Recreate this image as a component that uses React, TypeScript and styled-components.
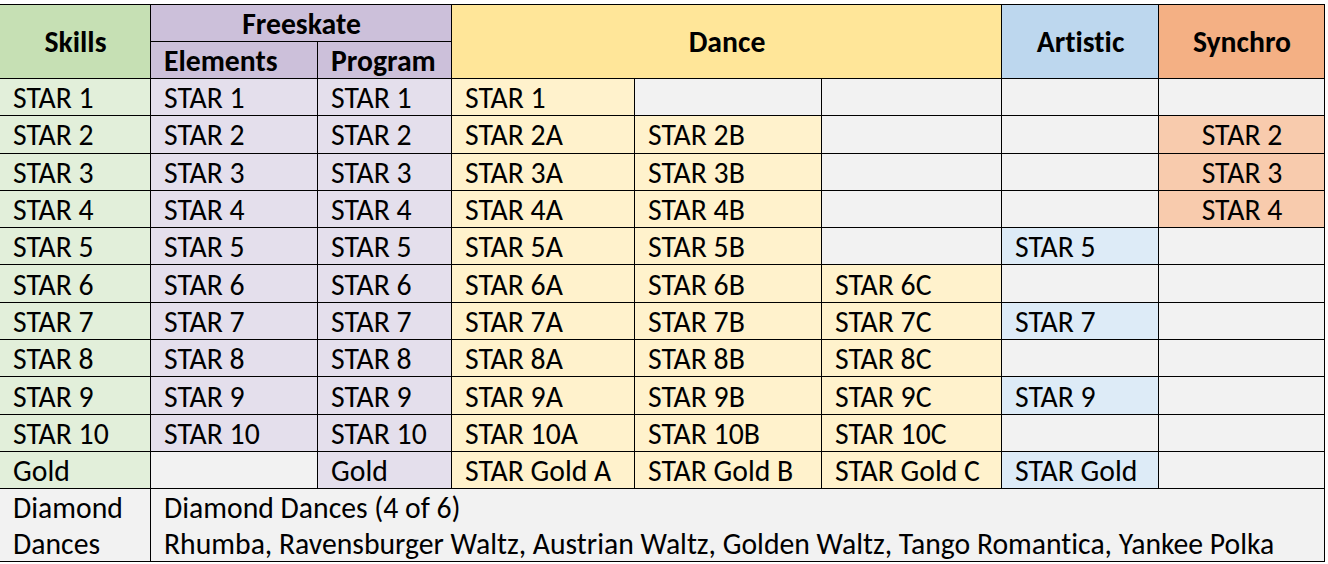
import React from "react";
import styled, { createGlobalStyle, css } from "styled-components";

type Tone = "skills" | "free" | "dance" | "artistic" | "synchro" | "empty";

const headerBg: Record<Tone, string> = {
  skills: "#C6E0B4",
  free: "#CCC0DA",
  dance: "#FFE699",
  artistic: "#BDD7EE",
  synchro: "#F4B084",
  empty: "#F2F2F2",
};

const dataBg: Record<Tone, string> = {
  skills: "#E2EFDA",
  free: "#E4DFEC",
  dance: "#FFF2CC",
  artistic: "#DDEBF7",
  synchro: "#F8CBAD",
  empty: "#F2F2F2",
};

const GlobalStyle = createGlobalStyle`
  html, body {
    margin: 0;
    padding: 0;
    background: #ffffff;
  }
  body {
    font-family: "Carlito", "Calibri", "Liberation Sans", sans-serif;
    font-variant-ligatures: none;
    color: #000000;
  }
`;

const Page = styled.div`
  padding-top: 4px;
  width: 1328px;
  height: 564px;
  box-sizing: border-box;
  overflow: hidden;
`;

const Sheet = styled.div`
  display: grid;
  grid-template-columns: 150px 166px 133px 182px 186px 179px 156px 165px;
  grid-template-rows: 36px 36px repeat(11, 36.3px) 72px;
  gap: 1px;
  width: fit-content;
  background: #000000;
  border: 1px solid #000000;
  border-left: none;
`;

const Cell = styled.div<{
  $tone: Tone;
  $head?: boolean;
  $center?: boolean;
  $col?: string;
  $row?: string;
}>`
  display: flex;
  align-items: center;
  justify-content: ${(p) => (p.$center ? "center" : "flex-start")};
  padding: ${(p) => (p.$head ? "1px 12px 0 13px" : "2px 12px 0 13px")};
  box-sizing: border-box;
  min-width: 0;
  white-space: nowrap;
  font-size: 29.7px;
  line-height: 36px;
  font-weight: ${(p) => (p.$head ? 700 : 400)};
  background: ${(p) => (p.$head ? headerBg[p.$tone] : dataBg[p.$tone])};
  ${(p) =>
    p.$col &&
    css`
      grid-column: ${p.$col};
    `}
  ${(p) =>
    p.$row &&
    css`
      grid-row: ${p.$row};
    `}
`;

const NoteCell = styled(Cell)`
  flex-direction: column;
  align-items: flex-start;
  justify-content: center;
  padding-top: 1px;
`;

const NoteLine = styled.span`
  display: block;
  height: 36px;
`;

type Row = {
  skills: string;
  elements: string;
  program: string;
  dance: [string, string, string];
  artistic: string;
  synchro: string;
};

const rows: Row[] = [
  { skills: "STAR 1", elements: "STAR 1", program: "STAR 1", dance: ["STAR 1", "", ""], artistic: "", synchro: "" },
  { skills: "STAR 2", elements: "STAR 2", program: "STAR 2", dance: ["STAR 2A", "STAR 2B", ""], artistic: "", synchro: "STAR 2" },
  { skills: "STAR 3", elements: "STAR 3", program: "STAR 3", dance: ["STAR 3A", "STAR 3B", ""], artistic: "", synchro: "STAR 3" },
  { skills: "STAR 4", elements: "STAR 4", program: "STAR 4", dance: ["STAR 4A", "STAR 4B", ""], artistic: "", synchro: "STAR 4" },
  { skills: "STAR 5", elements: "STAR 5", program: "STAR 5", dance: ["STAR 5A", "STAR 5B", ""], artistic: "STAR 5", synchro: "" },
  { skills: "STAR 6", elements: "STAR 6", program: "STAR 6", dance: ["STAR 6A", "STAR 6B", "STAR 6C"], artistic: "", synchro: "" },
  { skills: "STAR 7", elements: "STAR 7", program: "STAR 7", dance: ["STAR 7A", "STAR 7B", "STAR 7C"], artistic: "STAR 7", synchro: "" },
  { skills: "STAR 8", elements: "STAR 8", program: "STAR 8", dance: ["STAR 8A", "STAR 8B", "STAR 8C"], artistic: "", synchro: "" },
  { skills: "STAR 9", elements: "STAR 9", program: "STAR 9", dance: ["STAR 9A", "STAR 9B", "STAR 9C"], artistic: "STAR 9", synchro: "" },
  { skills: "STAR 10", elements: "STAR 10", program: "STAR 10", dance: ["STAR 10A", "STAR 10B", "STAR 10C"], artistic: "", synchro: "" },
  { skills: "Gold", elements: "", program: "Gold", dance: ["STAR Gold A", "STAR Gold B", "STAR Gold C"], artistic: "STAR Gold", synchro: "" },
];

const toneFor = (value: string, tone: Tone): Tone => (value ? tone : "empty");

export default function App() {
  return (
    <Page>
      <GlobalStyle />
      <Sheet>
        <Cell $head $tone="skills" $center $row="1 / span 2">Skills</Cell>
        <Cell $head $tone="free" $center $col="2 / span 2">Freeskate</Cell>
        <Cell $head $tone="dance" $center $col="4 / span 3" $row="1 / span 2">Dance</Cell>
        <Cell $head $tone="artistic" $center $col="7" $row="1 / span 2">Artistic</Cell>
        <Cell $head $tone="synchro" $center $col="8" $row="1 / span 2">Synchro</Cell>
        <Cell $head $tone="free" $col="2" $row="2">Elements</Cell>
        <Cell $head $tone="free" $col="3" $row="2">Program</Cell>

        {rows.map((r) => (
          <React.Fragment key={r.skills}>
            <Cell $tone="skills">{r.skills}</Cell>
            <Cell $tone={toneFor(r.elements, "free")}>{r.elements}</Cell>
            <Cell $tone={toneFor(r.program, "free")}>{r.program}</Cell>
            {r.dance.map((d, i) => (
              <Cell key={i} $tone={toneFor(d, "dance")}>{d}</Cell>
            ))}
            <Cell $tone={toneFor(r.artistic, "artistic")}>{r.artistic}</Cell>
            <Cell $tone={toneFor(r.synchro, "synchro")} $center>{r.synchro}</Cell>
          </React.Fragment>
        ))}

        <NoteCell $tone="empty">
          <NoteLine>Diamond</NoteLine>
          <NoteLine>Dances</NoteLine>
        </NoteCell>
        <NoteCell $tone="empty" $col="2 / span 7">
          <NoteLine>Diamond Dances (4 of 6)</NoteLine>
          <NoteLine>Rhumba, Ravensburger Waltz, Austrian Waltz, Golden Waltz, Tango Romantica, Yankee Polka</NoteLine>
        </NoteCell>
      </Sheet>
    </Page>
  );
}
